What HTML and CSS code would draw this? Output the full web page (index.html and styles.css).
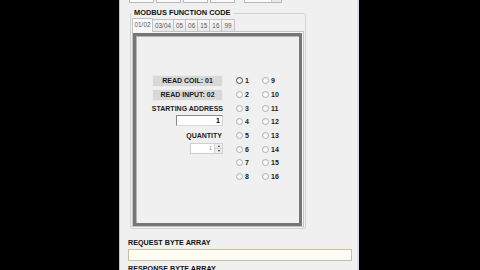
FILE: index.html
```html
<!DOCTYPE html>
<html>
<head>
<meta charset="utf-8">
<link rel="stylesheet" href="styles.css">
</head>
<body>
<div class="screen">
  <div class="app">
    <div class="topstrip">
      <span class="tb tb-a"></span>
      <span class="tb tb-b"></span>
      <span class="tb tb-c"></span>
      <span class="tb tb-d"></span>
      <span class="tb tb-e"><span class="drop"></span></span>
    </div>
    <fieldset class="group">
      <legend>MODBUS FUNCTION CODE</legend>
      <div class="tabs">
        <span class="tab active">01/02</span>
        <span class="tab">03/04</span>
        <span class="tab">05</span>
        <span class="tab">06</span>
        <span class="tab">15</span>
        <span class="tab">16</span>
        <span class="tab">99</span>
      </div>
      <div class="panel">
        <div class="frame">
          <div class="grid">
            <div class="btn">READ COIL: 01</div>
            <div class="radio"><span class="dot focus"></span><span>1</span></div>
            <div class="radio"><span class="dot"></span><span>9</span></div>

            <div class="btn">READ INPUT: 02</div>
            <div class="radio"><span class="dot"></span><span>2</span></div>
            <div class="radio"><span class="dot"></span><span>10</span></div>

            <div class="label">STARTING ADDRESS</div>
            <div class="radio"><span class="dot"></span><span>3</span></div>
            <div class="radio"><span class="dot"></span><span>11</span></div>

            <div class="textbox">1</div>
            <div class="radio"><span class="dot"></span><span>4</span></div>
            <div class="radio"><span class="dot"></span><span>12</span></div>

            <div class="label qty">QUANTITY</div>
            <div class="radio"><span class="dot"></span><span>5</span></div>
            <div class="radio"><span class="dot"></span><span>13</span></div>

            <div class="spinner"><span class="spinval">1</span><span class="arrows"><span class="up"></span><span class="down"></span></span></div>
            <div class="radio"><span class="dot"></span><span>6</span></div>
            <div class="radio"><span class="dot"></span><span>14</span></div>

            <div class="empty"></div>
            <div class="radio"><span class="dot"></span><span>7</span></div>
            <div class="radio"><span class="dot"></span><span>15</span></div>

            <div class="empty"></div>
            <div class="radio"><span class="dot"></span><span>8</span></div>
            <div class="radio"><span class="dot"></span><span>16</span></div>
          </div>
        </div>
      </div>
    </fieldset>
    <div class="bytes">
      <div class="lbl">REQUEST BYTE ARRAY</div>
      <div class="bytebox"></div>
      <div class="lbl lbl2">RESPONSE BYTE ARRAY</div>
    </div>
  </div>
</div>
</body>
</html>
```
FILE: styles.css
```css
html, body {
  margin: 0;
  padding: 0;
  background: #000;
}
.screen {
  width: 480px;
  height: 270px;
  overflow: hidden;
  display: flex;
  background: #000;
}
.app {
  margin-left: 119px;
  width: 240px;
  height: 270px;
  box-sizing: border-box;
  background: #f0f0f0;
  border-left: 1px solid #c4c4c4;
  border-right: 2px solid #dcdcec;
  font-family: "Liberation Sans", Arial, sans-serif;
  color: #000;
  overflow: hidden;
}
.topstrip {
  height: 3px;
  display: flex;
  align-items: flex-end;
  overflow: hidden;
  padding-left: 9px;
  gap: 2px;
}
.tb {
  flex: none;
  height: 12px;
  box-sizing: border-box;
  border: 1px solid #b8b8b8;
  background: #fafafa;
}
.tb-a, .tb-b, .tb-c, .tb-d { width: 25px; }
.tb-e { width: 38px; margin-left: 7px; display: flex; justify-content: flex-end; }
.drop {
  width: 9px;
  height: 10px;
  border-left: 1px solid #c8c8c8;
  background: #e8e8e8;
}
.group {
  margin: 5px 0 0 10px;
  width: 176px;
  box-sizing: border-box;
  min-width: 0;
  padding: 0 1px 1px 1px;
  border: 1px solid #cfd5d9;
  border-radius: 2px;
}
.group legend {
  padding: 0 2px;
  font-size: 7.4px;
  font-weight: bold;
  line-height: 10px;
  color: #111;
}
.tabs {
  height: 13px;
  display: flex;
  align-items: flex-end;
  padding-left: 1px;
}
.tab {
  height: 12px;
  box-sizing: border-box;
  padding: 0 2px;
  margin-left: -1px;
  border: 1px solid #c4c4c4;
  border-bottom: none;
  background: linear-gradient(#f7f7f7, #e7e7e7);
  font-size: 6.4px;
  line-height: 11px;
  color: #5a5a5a;
}
.tab.active {
  height: 14px;
  margin-bottom: -1px;
  position: relative;
  z-index: 1;
  background: #fbfbfb;
  padding: 0 1.5px;
}
.panel {
  height: 196px;
  box-sizing: border-box;
  border: 1px solid #c4c4c4;
  background: #f6f6f6;
  padding: 1px 1px 0 0;
  display: flex;
  flex-direction: column;
}
.frame {
  flex: 1;
  border: 3px solid #767676;
  box-shadow: inset 1px 1px 0 #b4b4b4;
  background: #f0f0f0;
  padding: 38px 0 0 15px;
}
.grid {
  display: grid;
  grid-template-columns: 85px 26px auto;
  grid-auto-rows: 13.7px;
  font-size: 7px;
  font-weight: bold;
}
.btn {
  justify-self: end;
  align-self: center;
  margin-right: 13px;
  width: 71px;
  height: 12px;
  box-sizing: border-box;
  border: 1px solid #ececec;
  background: #d8d8d8;
  text-align: center;
  line-height: 10px;
  color: #1a1a1a;
}
.label {
  justify-self: end;
  align-self: center;
  margin-right: 13px;
  line-height: 9px;
  color: #1a1a1a;
}
.label.qty { margin-right: 14px; }
.textbox {
  justify-self: end;
  align-self: start;
  margin-right: 13px;
  width: 47px;
  height: 11px;
  box-sizing: border-box;
  border: 1px solid #8a8a8a;
  border-right-color: #d0d0d0;
  border-bottom-color: #d8d8d8;
  background: #fff;
  text-align: right;
  padding-right: 2px;
  line-height: 9px;
}
.spinner {
  justify-self: end;
  align-self: start;
  margin: 0.5px 13px 0 0;
  width: 33px;
  height: 11px;
  box-sizing: border-box;
  border: 1px solid #cfcfcf;
  background: #fff;
  display: flex;
  justify-content: flex-end;
}
.spinval {
  font-weight: normal;
  font-size: 6px;
  color: #9a9a9a;
  line-height: 9px;
  padding-right: 2px;
}
.arrows {
  width: 7px;
  display: flex;
  flex-direction: column;
  border-left: 1px solid #d4d4d4;
  background: #eeeeee;
}
.arrows span {
  flex: 1;
  display: flex;
  align-items: center;
  justify-content: center;
}
.arrows .up { border-bottom: 1px solid #d4d4d4; }
.arrows .up::after {
  content: "";
  border-left: 1.5px solid transparent;
  border-right: 1.5px solid transparent;
  border-bottom: 2px solid #333;
}
.arrows .down::after {
  content: "";
  border-left: 1.5px solid transparent;
  border-right: 1.5px solid transparent;
  border-top: 2px solid #333;
}
.radio {
  display: flex;
  align-items: center;
  gap: 2px;
  color: #1a1a1a;
  line-height: 9px;
}
.dot {
  width: 7px;
  height: 7px;
  box-sizing: border-box;
  border-radius: 50%;
  border: 1px solid #b2b2b2;
  background: radial-gradient(circle at 60% 60%, #ffffff, #ececec);
}
.dot.focus { border-color: #4a4a4a; }
.bytes {
  padding: 9px 0 0 8px;
}
.lbl {
  font-size: 7.2px;
  font-weight: bold;
  line-height: 9px;
  color: #111;
}
.bytebox {
  margin-top: 2px;
  width: 224px;
  height: 12px;
  box-sizing: border-box;
  border: 1px solid #cdbf98;
  background: #fdfcf5;
}
.lbl2 { margin-top: 2.5px; }
```
